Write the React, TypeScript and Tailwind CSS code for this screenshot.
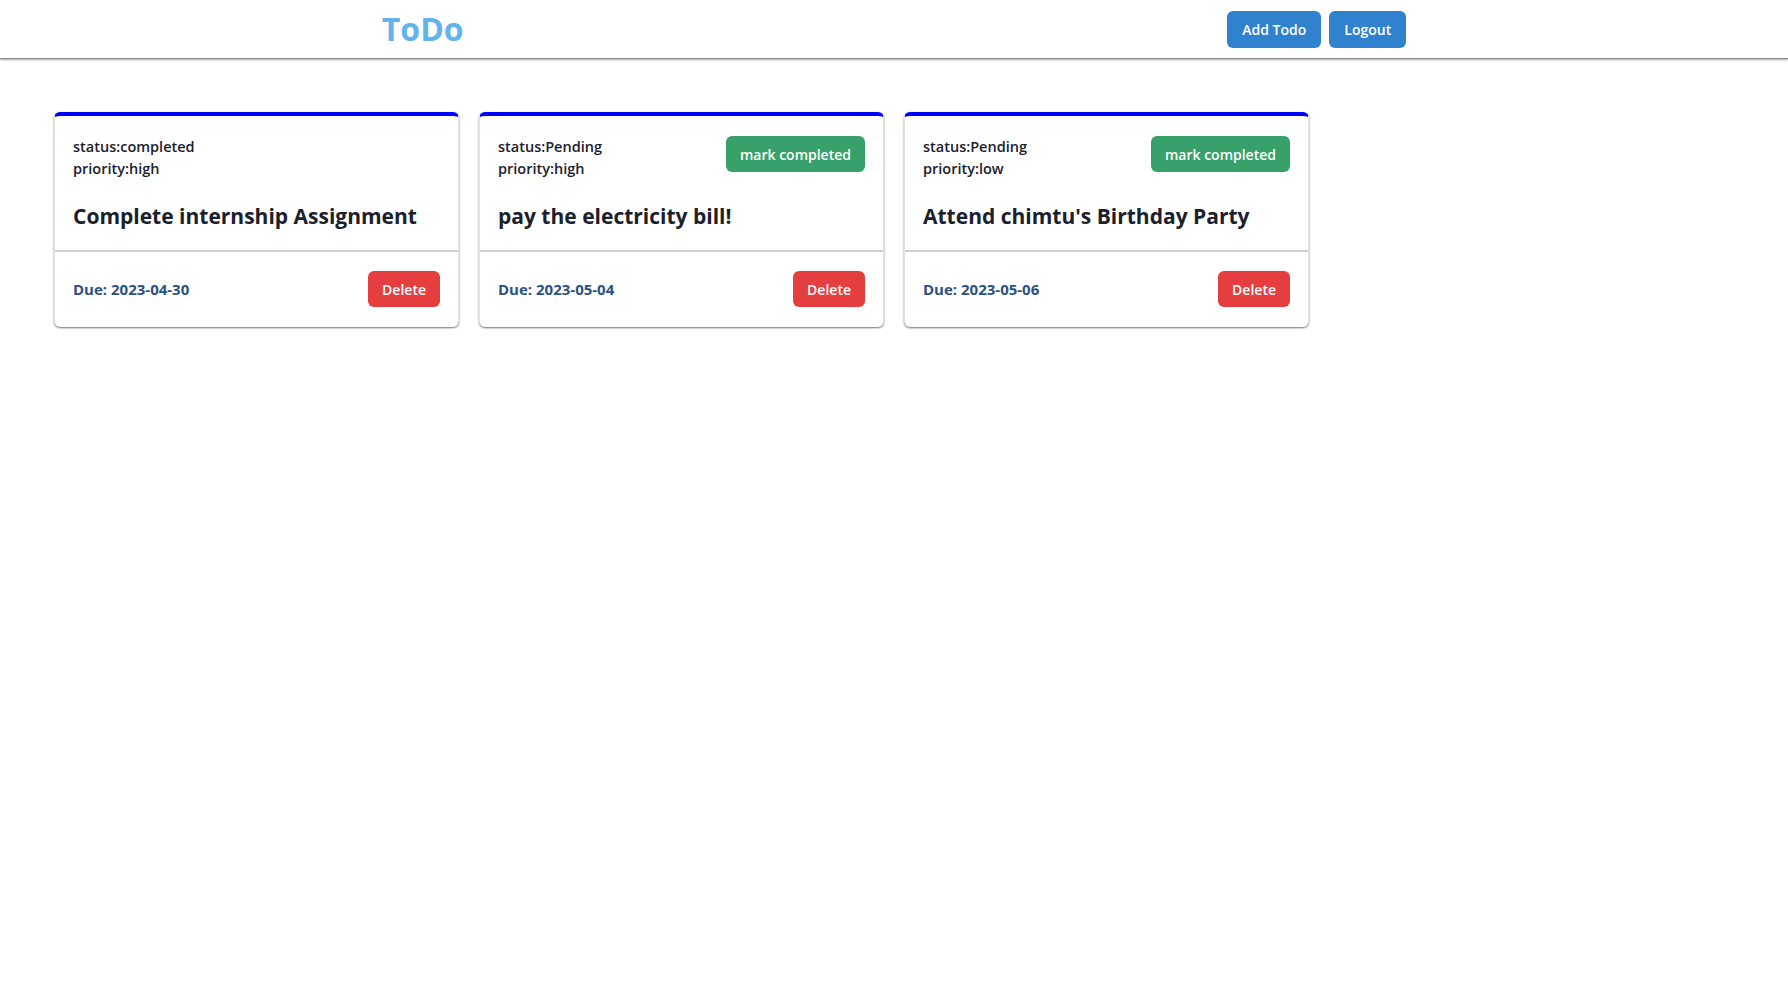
const todos = [
  {
    id: 1,
    status: "completed",
    priority: "high",
    title: "Complete internship Assignment",
    due: "2023-04-30",
  },
  {
    id: 2,
    status: "Pending",
    priority: "high",
    title: "pay the electricity bill!",
    due: "2023-05-04",
  },
  {
    id: 3,
    status: "Pending",
    priority: "low",
    title: "Attend chimtu's Birthday Party",
    due: "2023-05-06",
  },
];

type Todo = (typeof todos)[number];

function TodoCard({ todo }: { todo: Todo }) {
  return (
    <div className="bg-white rounded-md border-t-4 border-t-[#0000ff] border-x border-x-[#e2e2e2] shadow-[0_1px_2px_rgba(0,0,0,0.55)] overflow-hidden">
      {/* Header */}
      <div className="px-[18px] pt-5 pb-[19px]">
        <div className="flex items-start justify-between">
          <div className="text-[14.5px] leading-[22px] font-semibold text-[#1a202c]">
            <p>status:{todo.status}</p>
            <p>priority:{todo.priority}</p>
          </div>
          {todo.status === "Pending" && (
            <button className="h-9 px-[14px] rounded-md bg-[#38a169] text-white text-[14px] font-semibold">
              mark completed
            </button>
          )}
        </div>
        <h2 className="mt-[21px] text-[21px] leading-[30px] font-bold text-[#1a202c]">{todo.title}</h2>
      </div>

      <div className="border-t-2 border-[#cfcfcf]" />

      {/* Footer */}
      <div className="px-[18px] pt-[19px] pb-5 flex items-center justify-between">
        <p className="text-[15px] font-bold text-[#2c5282]">Due: {todo.due}</p>
        <button className="h-9 px-[14px] rounded-md bg-[#e53e3e] text-white text-[14px] font-semibold">
          Delete
        </button>
      </div>
    </div>
  );
}

export default function App() {
  return (
    <div className="min-h-screen bg-white font-['Open_Sans',sans-serif]">
      <header className="h-[59px] flex items-center justify-around border-b border-[#8a8a8a] shadow-[0_1px_2px_rgba(0,0,0,0.35)]">
        <h1 className="text-[32px] font-bold text-[#63b3ed] leading-none">ToDo</h1>
        <div className="flex gap-2">
          <button className="h-[37px] px-[15px] rounded-md bg-[#3182ce] text-white text-[14px] font-semibold">
            Add Todo
          </button>
          <button className="h-[37px] px-[15px] rounded-md bg-[#3182ce] text-white text-[14px] font-semibold">
            Logout
          </button>
        </div>
      </header>

      <main className="px-[54px] pt-[53px] grid grid-cols-4 gap-5 items-start">
        {todos.map((todo) => (
          <TodoCard key={todo.id} todo={todo} />
        ))}
      </main>
    </div>
  );
}
